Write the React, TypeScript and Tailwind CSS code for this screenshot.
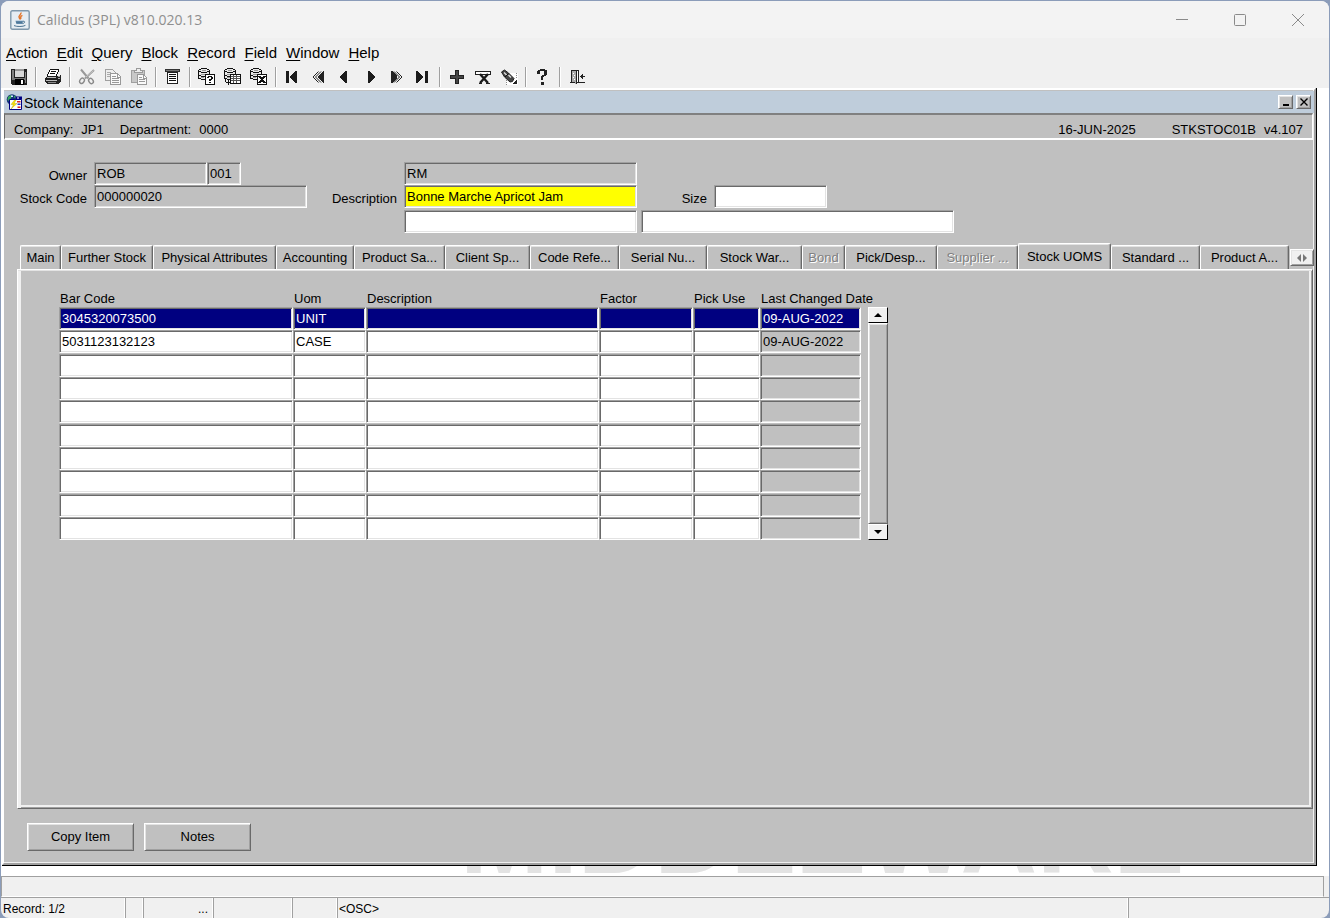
import { useState, type ReactNode } from "react";
import clsx from "clsx";

const sunken =
  "border border-t-[#a0a0a0] border-l-[#a0a0a0] border-b-white border-r-white shadow-[inset_1px_1px_0_#696969,inset_-1px_-1px_0_#e3e3e3]";
const raised =
  "border border-t-white border-l-white border-b-[#696969] border-r-[#696969] shadow-[inset_1px_1px_0_#e3e3e3,inset_-1px_-1px_0_#a0a0a0]";

const menus = ["Action", "Edit", "Query", "Block", "Record", "Field", "Window", "Help"];

const tabs = [
  { label: "Main", width: "w-[41px]" },
  { label: "Further Stock", width: "w-[92px]" },
  { label: "Physical Attributes", width: "w-[123px]" },
  { label: "Accounting", width: "w-[78px]" },
  { label: "Product Sa...", width: "w-[91px]" },
  { label: "Client Sp...", width: "w-[85px]" },
  { label: "Code Refe...", width: "w-[89px]" },
  { label: "Serial Nu...", width: "w-[88px]" },
  { label: "Stock War...", width: "w-[95px]" },
  { label: "Bond", width: "w-[43px]", disabled: true },
  { label: "Pick/Desp...", width: "w-[92px]" },
  { label: "Supplier ...", width: "w-[81px]", disabled: true },
  { label: "Stock UOMS", width: "w-[93px]" },
  { label: "Standard ...", width: "w-[89px]" },
  { label: "Product A...", width: "w-[89px]" },
];

const columns = [
  { label: "Bar Code", width: "w-[234px]" },
  { label: "Uom", width: "w-[73px]" },
  { label: "Description", width: "w-[233px]" },
  { label: "Factor", width: "w-[94px]" },
  { label: "Pick Use", width: "w-[67px]" },
  { label: "Last Changed Date", width: "w-[101px]" },
];

const uoms = [
  ["3045320073500", "UNIT", "", "", "", "09-AUG-2022"],
  ["5031123132123", "CASE", "", "", "", "09-AUG-2022"],
];
const rows = Array.from({ length: 10 }, (_, i) => uoms[i] ?? ["", "", "", "", "", ""]);

function Glyph({ children }: { children: ReactNode }) {
  return (
    <svg width="18" height="18" viewBox="0 0 18 18" fill="none" shapeRendering="crispEdges" aria-hidden="true">
      {children}
    </svg>
  );
}

function Drum() {
  return (
    <>
      <path d="M3 1h6v1h2v9H9v1H3v-1H1V2h2z" fill="#e8e8e8" />
      <path d="M3 .5h6M3 4.5h6M1 1.5h2M9 1.5h2M1 3.5h2M9 3.5h2M.5 2v9M11.5 2v5M1 7.5h2M3 8.5h5M1 10.5h2M3 11.5h4" stroke="#111" />
      <path d="M4 2.5h4M3 6.5h6M3 9.5h3" stroke="#999" />
    </>
  );
}

const icons: Record<string, ReactNode> = {
  Save: (
    <>
      <path d="M1 1h16v16H2l-1-1z" fill="#222" />
      <path d="M2 2h2v8H2zM15 4h1v11h-1z" fill="#808080" />
      <path d="M5 1h9v8H5z" fill="#d8d8d8" />
      <path d="M5 1h9v2H5z" fill="#999" />
      <path d="M2 10h14v2H2z" fill="#777" />
      <path d="M5 11h9v6H5z" fill="#000" />
      <path d="M11 12h2v4h-2z" fill="#fff" />
    </>
  ),
  Print: (
    <>
      <path d="M6 1h9l-3 7H3z" fill="#fff" />
      <path d="M6 1.5h9M5.5 2v2M4.5 4v2M3.5 6v2M14.5 2v2M13.5 4v2M12.5 6v2M7 3.5h5M6 5.5h5" stroke="#111" />
      <path d="M3 8h12l2-1v6l-3 3H3l-2-2v-4z" fill="#222" />
      <path d="M3 9h9v1H3zM2 12h11v1H2z" fill="#bbb" />
      <path d="M4 14h8v1H4z" fill="#888" />
      <path d="M14 8h2v1h-2zM14 10h2v1h-2z" fill="#aaa" />
    </>
  ),
  Cut: (
    <g shapeRendering="auto" stroke="#8a8a8a" strokeWidth="1.4">
      <path d="M16 2 7 10.5M3 1.5l7.5 9" stroke="#999" strokeWidth="2" />
      <path d="M15.5 2.5 8 9" stroke="#ddd" strokeWidth=".7" />
      <ellipse cx="4" cy="12.8" rx="2.1" ry="2.8" transform="rotate(35 4 12.8)" />
      <ellipse cx="13" cy="13" rx="2.1" ry="2.8" transform="rotate(-35 13 13)" />
    </g>
  ),
  Copy: (
    <>
      <path d="M1.5 1.5h7l3 3v8h-10z" fill="#eee" stroke="#a0a0a0" />
      <path d="M3 4.5h4M3 6.5h3M3 8.5h3" stroke="#aaa" />
      <path d="M6.5 5.5h7l3 3v8h-10z" fill="#fafafa" stroke="#999" />
      <path d="M13.5 5v4h3M8 8.5h4M8 10.5h7M8 12.5h7M8 14.5h7" stroke="#999" />
    </>
  ),
  Paste: (
    <>
      <path d="M1.5 2.5h13v12h-13z" fill="#c8c8c8" stroke="#a0a0a0" />
      <path d="M6 .5h4v2h2v2H4v-2h2z" fill="#eee" stroke="#999" />
      <path d="M7.5 6.5h6l3 3v7h-9z" fill="#fafafa" stroke="#999" />
      <path d="M13.5 7v3h3M9 9.5h3M9 11.5h6M9 13.5h6" stroke="#999" />
    </>
  ),
  "List of Values": (
    <>
      <path d="M1 1h15v3H1z" fill="#333" />
      <path d="M2 2h13v1H2z" fill="#777" />
      <path d="M3.5 4.5h10v11h-10z" fill="#fff" stroke="#222" />
      <path d="M5 6.5h7M5 8.5h7M5 10.5h7M5 12.5h7" stroke="#111" />
    </>
  ),
  "Enter Query": (
    <>
      <Drum />
      <path d="M7.5 6.5h9v10h-9z" fill="#fff" stroke="#111" />
      <path d="M10 8h4v1h1v2h-1v1h-1v1h-2v-2h2v-2h-2v1H9V9h1zM11 14h2v1h-2z" fill="#111" />
    </>
  ),
  "Execute Query": (
    <>
      <Drum />
      <path d="M6.5 6.5h10v9h-10z" fill="#fff" stroke="#111" />
      <path d="M7 8.5h9M7 10.5h9M7 12.5h9M9.5 7v8M12.5 7v8" stroke="#555" />
      <path d="M1.5 11v3M2 14.5h4M4.5 12v5" stroke="#111" />
    </>
  ),
  "Cancel Query": (
    <>
      <Drum />
      <path d="M7.5 6.5h9v10h-9z" fill="#fff" stroke="#111" />
      <path d="m9 8 6 7M15 8l-6 7" stroke="#111" strokeWidth="2" />
    </>
  ),
  "First Record": <path d="M2 3h3v12H2zM13 3v12h-1l-6-5V8l6-5z" fill="#1c1c1c" />,
  "Previous Block": (
    <>
      <path d="M14 3v12h-1l-5-5V8l5-5z" fill="#222" />
      <path d="M8.5 3.5 3 9l5.5 5.5M11 3.5 5.5 9l5.5 5.5" stroke="#222" shapeRendering="auto" />
    </>
  ),
  "Previous Record": <path d="M11 3v12h-1l-6-5V8l6-5z" fill="#1c1c1c" />,
  "Next Record": <path d="M6 3v12h1l6-5V8L7 3z" fill="#1c1c1c" />,
  "Next Block": (
    <>
      <path d="M3 3v12h1l5-5V8L4 3z" fill="#222" />
      <path d="M8.5 3.5 14 9l-5.5 5.5M6 3.5 11.5 9 6 14.5" stroke="#222" shapeRendering="auto" />
    </>
  ),
  "Last Record": <path d="M2 3v12h1l6-5V8L3 3zM11 3h3v12h-3z" fill="#1c1c1c" />,
  "Insert Record": (
    <>
      <path d="M7 2h4v5h5v4h-5v5H7v-5H2V7h5z" fill="#222" />
      <path d="M8 3h2v12H8zM3 8h12v2H3z" fill="#444" />
    </>
  ),
  "Remove Record": (
    <>
      <path d="M1.5 3.5h15v3h-15z" fill="#fff" stroke="#222" />
      <path d="m6 6 8 9M14 6l-8 9" stroke="#1a1a1a" strokeWidth="2.4" shapeRendering="auto" />
      <path d="M5 15h3v1H5zM12 15h4v1h-4z" fill="#222" />
    </>
  ),
  "Lock Record": (
    <>
      <path d="M6 5h12v12H6z" fill="#fff" />
      <path d="M6.5 10v7M16.5 5v6" stroke="#888" strokeDasharray="1 1" />
      <g shapeRendering="auto">
        <path d="m1.5 4 3-2 4 3 5.5 5.5-1.5 3-2.5.5L4.5 9z" fill="#444" stroke="#222" />
        <path d="m4 4.5 3 3M8.5 7 11 9.500" stroke="#ddd" strokeWidth="1.4" />
        <path d="m5 9 3.500-3.500" stroke="#111" />
      </g>
      <path d="M12 16h5v-5z" fill="#222" />
    </>
  ),
  Help: (
    <path d="M6 1h5v1h2v5h-1v1h-2v1H9v3H7V8h1V7h2V3H6v3H3V3h1V2h2zM7 14h3v3H7z" fill="#222" />
  ),
  Exit: (
    <>
      <path d="M3.5 2.5h7v12h-7z" fill="#fff" stroke="#222" />
      <path d="M4 3h4v13l-4-2z" fill="#aaa" />
      <path d="M8.5 3v13M4 14.5h3M2 14.5h2M11 14.5h6M12 8.5h5M13.5 7v3M14.5 6v5" stroke="#222" />
      <path d="M5 5h1v1H5zM6 7h1v1H6zM5 9h1v1H5zM6 11h1v1H6z" fill="#fff" />
    </>
  ),
};

const toolbar = [
  ["Save"],
  ["Print"],
  ["Cut", "Copy", "Paste"],
  ["List of Values"],
  ["Enter Query", "Execute Query", "Cancel Query"],
  ["First Record", "Previous Block", "Previous Record", "Next Record", "Next Block", "Last Record"],
  ["Insert Record", "Remove Record", "Lock Record"],
  ["Help"],
  ["Exit"],
];

function Field({ id, label, value = "", className }: { id: string; label?: string; value?: string; className: string }) {
  return (
    <input
      id={id}
      aria-label={label}
      defaultValue={value}
      className={clsx("h-[23px] px-[2px] pb-px outline-none", sunken, className)}
    />
  );
}

function TitleBar() {
  return (
    <header className="flex h-[37px] items-center bg-[#f3f3f3] pr-[2px] pl-[9px]">
      <svg width="20" height="20" viewBox="0 0 20 20" aria-hidden="true">
        <rect x=".8" y=".8" width="18.4" height="18.4" rx="1.5" fill="#e6edf2" stroke="#7f98ab" strokeWidth="1.4" />
        <path d="M10.8 2.5c1.2 2-3 3.1-1.6 5.2.5.8 1 1.2.6 2M12.4 5.4c-2 1-2.2 2-1.2 3.4" stroke="#e2762c" strokeWidth="1.5" fill="none" />
        <path d="M5.5 10.7h7.6l-.7 3.4H6.4z" fill="#5f89ab" />
        <path d="M13 11.2c2.6-.4 2 2.2-.6 2.4M4 15.6c3 1.3 9 1.2 11.4-.2M6.2 12.3h6" stroke="#4c7391" fill="none" />
      </svg>
      <h1 className="ml-[7px] font-['Open_Sans',sans-serif] text-[14px] text-[#8f8f8f]">Calidus (3PL) v810.020.13</h1>
      <div className="ml-auto flex text-[#8a8a8a]">
        <button aria-label="Minimize" className="flex w-[58px] justify-center">
          <svg width="12" height="12" viewBox="0 0 12 12"><path d="M0 5.5h12" stroke="currentColor" /></svg>
        </button>
        <button aria-label="Maximize" className="flex w-[58px] justify-center">
          <svg width="12" height="12" viewBox="0 0 12 12"><rect x=".5" y=".5" width="11" height="11" rx="1" fill="none" stroke="currentColor" /></svg>
        </button>
        <button aria-label="Close" className="flex w-[58px] justify-center">
          <svg width="12" height="12" viewBox="0 0 12 12"><path d="m0 0 12 12M12 0 0 12" stroke="currentColor" /></svg>
        </button>
      </div>
    </header>
  );
}

function Toolbar() {
  return (
    <div className="flex h-[22px] items-center pl-[5px]">
      {toolbar.map((group, i) => (
        <div key={i} className="flex items-center">
          {i > 0 && (
            <div className="flex w-2 justify-center">
              <span className="h-5 w-[2px] border-l border-[#a0a0a0] bg-white" />
            </div>
          )}
          {group.map((name) => (
            <button key={name} aria-label={name} className="flex w-[26px] justify-center">
              <Glyph>{icons[name]}</Glyph>
            </button>
          ))}
        </div>
      ))}
    </div>
  );
}

function UomTable() {
  const [current, setCurrent] = useState(0);

  return (
    <div className="flex items-end gap-[7px]">
      <table className="w-[802px] table-fixed border-collapse">
        <thead>
          <tr>
            {columns.map((col) => (
              <th key={col.label} className={clsx("h-4 p-0 pl-px text-left font-normal whitespace-nowrap", col.width)}>
                {col.label}
              </th>
            ))}
          </tr>
        </thead>
        <tbody>
          {rows.map((row, r) => (
            <tr key={r} className={r % 3 === 1 ? "h-6" : "h-[23px]"}>
              {row.map((value, c) => (
                <td key={c} className="p-0 align-top">
                  <input
                    aria-label={`${columns[c].label} ${r + 1}`}
                    defaultValue={value}
                    onFocus={() => setCurrent(r)}
                    className={clsx(
                      "block h-[23px] w-full px-[2px] pb-px outline-none",
                      sunken,
                      r === current ? "bg-[#000080] text-white" : c === 5 ? "bg-[#c0c0c0]" : "bg-white"
                    )}
                  />
                </td>
              ))}
            </tr>
          ))}
        </tbody>
      </table>
      <div className="flex h-[233px] w-5 flex-col">
        <button aria-label="Scroll up" className="flex h-4 items-center justify-center border border-t-white border-r-black border-b-black border-l-white bg-[#f0f0f0]">
          <svg width="8" height="4" viewBox="0 0 8 4"><path d="M4 0 8 4H0z" /></svg>
        </button>
        <div className={clsx("flex-1", raised)} />
        <button aria-label="Scroll down" className="flex h-4 items-center justify-center border border-t-white border-r-black border-b-black border-l-white bg-[#f0f0f0]">
          <svg width="8" height="4" viewBox="0 0 8 4"><path d="M4 4 8 0H0z" /></svg>
        </button>
      </div>
    </div>
  );
}

export default function App() {
  const [activeTab, setActiveTab] = useState("Stock UOMS");

  return (
    <div className="min-h-screen bg-[#8b9cb9] px-px pt-px font-['Liberation_Sans',Arial,sans-serif] text-[13px] leading-4 text-black">
      <div className="flex min-h-[calc(100vh-1px)] flex-col overflow-hidden rounded-lg bg-[#f0f0f0]">
        <TitleBar />
        <nav className="flex h-7 items-center gap-[9px] pt-[2px] pl-[5px] text-[15px]">
          {menus.map((menu) => (
            <button key={menu}>
              <span className="underline underline-offset-2">{menu[0]}</span>
              {menu.slice(1)}
            </button>
          ))}
        </nav>
        <Toolbar />

        <div className="flex flex-1 flex-col bg-white pr-3 pl-px">
          <main className="flex flex-1 flex-col border-r border-b border-black">
            <div className="flex flex-1 flex-col border-2 border-t-white border-r-[#a0a0a0] border-b-[#a0a0a0] border-l-white bg-[#c0c0c0] pt-px shadow-[inset_-1px_-1px_0_#f0f0f0]">
              <div className="flex h-[22px] items-center bg-[#bfcddb] pr-[3px] pl-[2px]">
                <svg width="17" height="17" viewBox="0 0 17 17" aria-hidden="true">
                  <circle cx="6" cy="5.500" r="5.300" fill="#14307a" />
                  <path d="M2 3c2-2.500 4-2 4-1S4.500 4 4.500 5.500 2 7 1.500 6zM8 1.500l2 1.500-2 1z" fill="#35a85a" />
                  <path d="M5 1.500h2v1.500H5z" fill="#cfe6ff" />
                  <path d="M3.500 5.500h12v10h-12z" fill="#fff" stroke="#000080" />
                  <path d="M10 2.500h6v3h-6z" fill="#000080" />
                  <path d="M11 3.500h2v1h-2z" fill="#fff" />
                  <path d="M8.500 6 5 10.500h2.500L5 15l6-5.500H8.200L10 6z" fill="#ffe600" stroke="#8a7a00" strokeWidth=".3" />
                  <path d="M11 7h3.500v1.500H11zM11.500 12.500h3V14h-3z" fill="#d22" />
                  <path d="M11.500 9.500h3V11h-3z" fill="#2038d0" />
                </svg>
                <h2 className="ml-px pt-px text-[14px]">Stock Maintenance</h2>
                <div className="ml-auto flex gap-[3px]">
                  <button aria-label="Minimize form" className={clsx("flex h-[14px] w-[15px] items-end justify-center bg-[#c0c0c0] pb-[2px]", raised)}>
                    <span className="h-[2px] w-[6px] bg-black" />
                  </button>
                  <button aria-label="Close form" className={clsx("flex h-[14px] w-[15px] items-center justify-center bg-[#c0c0c0]", raised)}>
                    <svg width="8" height="8" viewBox="0 0 8 8"><path d="m.5 .5 7 7M7.5 .5l-7 7" stroke="#000" strokeWidth="1.4" /></svg>
                  </button>
                </div>
              </div>

              <div className="mr-px flex h-[27px] items-center border-t-2 border-r border-b-2 border-l border-t-[#808080] border-r-white border-b-white border-l-[#696969] pt-[7px] pr-[9px] pl-[9px]">
                <span>Company:</span>
                <span className="ml-2">JP1</span>
                <span className="ml-4">Department:</span>
                <span className="ml-2">0000</span>
                <span className="ml-auto">16-JUN-2025</span>
                <span className="ml-9">STKSTOC01B</span>
                <span className="ml-2">v4.107</span>
              </div>

              <form className="mt-[22px] grid grid-cols-[90px_213px_97px_233px_77px_240px] grid-rows-[23px_23px_25px] items-end">
                <label htmlFor="owner" className="pr-[7px] pb-px text-right">Owner</label>
                <div className="flex">
                  <Field id="owner" value="ROB" className="w-[113px]" />
                  <Field id="owner-no" label="Owner number" value="001" className="w-[34px]" />
                </div>
                <Field id="owner-name" label="Owner name" value="RM" className="col-start-4" />
                <label htmlFor="stock-code" className="col-start-1 pr-[7px] pb-px text-right">Stock Code</label>
                <Field id="stock-code" value="000000020" className="w-full" />
                <label htmlFor="description" className="pr-[7px] pb-px text-right">Description</label>
                <Field id="description" value="Bonne Marche Apricot Jam" className="bg-[#ffff00]" />
                <label htmlFor="size" className="pr-[7px] pb-px text-right">Size</label>
                <Field id="size" className="w-[113px] bg-white" />
                <Field id="description-2" label="Description line 2" className="col-start-4 bg-white" />
                <Field id="description-3" label="Description line 3" className="col-span-2 ml-1 bg-white" />
              </form>

              <div className="mt-[10px] flex items-end pl-4">
                <div role="tablist" className="flex items-end">
                  {tabs.map((tab) => {
                    const active = tab.label === activeTab;
                    return (
                      <button
                        key={tab.label}
                        role="tab"
                        aria-selected={active}
                        disabled={tab.disabled}
                        onClick={() => setActiveTab(tab.label)}
                        className={clsx(
                          "shrink-0 rounded-t-[2px] border-t border-r border-l border-t-white border-r-[#696969] border-l-white pt-px text-center whitespace-nowrap shadow-[inset_-1px_0_0_#a0a0a0,inset_0_1px_0_#e3e3e3]",
                          tab.width,
                          active ? "h-[26px]" : "h-6",
                          tab.disabled && "text-[#808080] [text-shadow:1px_1px_0_#fff]"
                        )}
                      >
                        {tab.label}
                      </button>
                    );
                  })}
                </div>
                <button aria-label="Scroll tabs" className={clsx("mb-[3px] ml-px flex h-[17px] w-6 items-center justify-center bg-[#f0f0f0]", raised)}>
                  <svg width="12" height="8" viewBox="0 0 12 8" fill="#777"><path d="M5 0v8L1 4zM7 0v8l4-4z" /></svg>
                </button>
              </div>

              <section className="mr-px ml-[13px] flex-1 border border-t-white border-r-[#696969] border-b-[#696969] border-l-white pt-[21px] pl-[41px] shadow-[inset_0_1px_0_#e3e3e3,inset_3px_0_0_#f0f0f0,inset_-1px_-1px_0_#a0a0a0,inset_-3px_-3px_0_#f0f0f0]">
                <UomTable />
              </section>

              <div className="flex gap-[10px] pt-[14px] pb-3 pl-[23px]">
                <button className={clsx("h-7 w-[107px]", raised)}>Copy Item</button>
                <button className={clsx("h-7 w-[107px]", raised)}>Notes</button>
              </div>
            </div>
          </main>
        </div>

        <div className="flex h-[10px] items-end overflow-hidden bg-white pl-[459px]" aria-hidden="true">
          <span className="text-[106px] leading-[79px] font-bold text-[#e3e3e3]">MIDDLEWARE</span>
        </div>

        <footer className="text-[12px]">
          <div className="mr-[5px] h-[21px] border border-t-[#a0a0a0] border-r-[#a0a0a0] border-b-white border-l-[#a0a0a0]" />
          <div className="flex h-[21px] items-center border-t border-[#a0a0a0] *:h-full *:border-r *:border-[#a0a0a0] *:pt-[3px] *:shadow-[inset_-1px_0_0_#fff]">
            <span className="w-[125px] pl-[2px]">Record: 1/2</span>
            <span className="w-[18px]" />
            <span className="w-[70px] pr-[5px] text-right">...</span>
            <span className="w-[79px]" />
            <span className="w-[45px]" />
            <span className="w-[791px] pl-px">&lt;OSC&gt;</span>
          </div>
        </footer>
      </div>
    </div>
  );
}
